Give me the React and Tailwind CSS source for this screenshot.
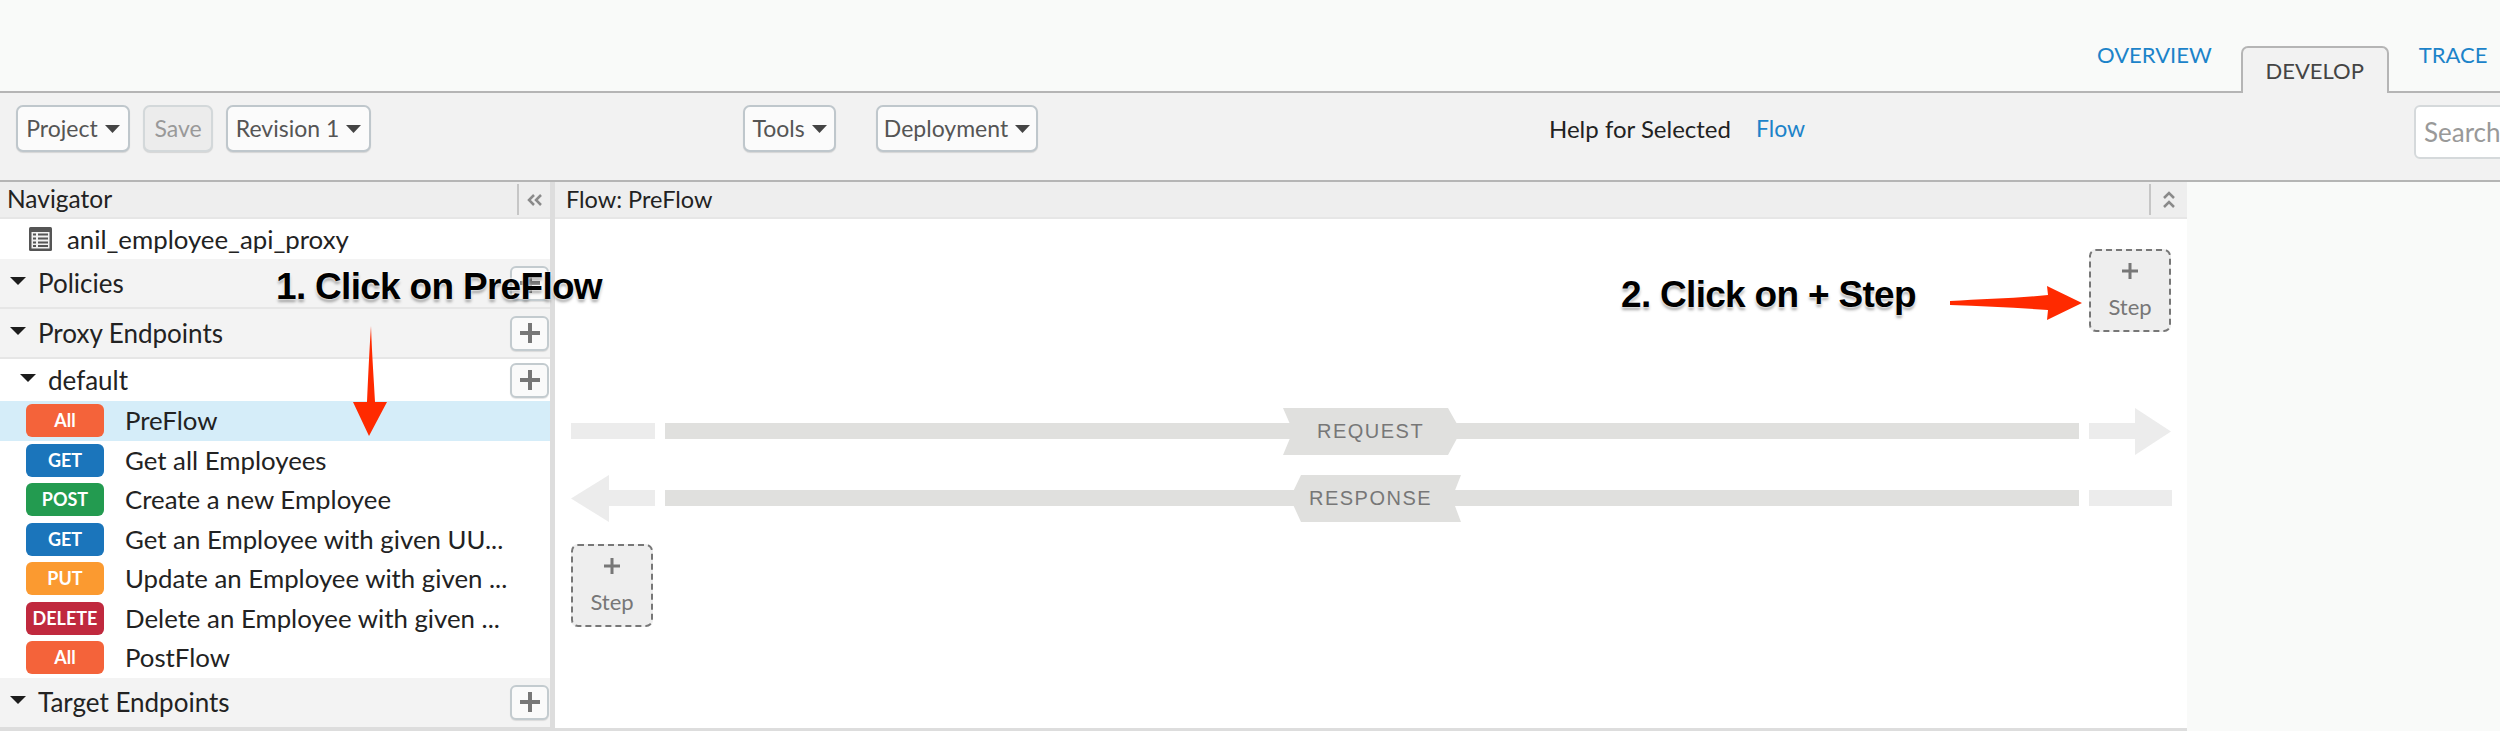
import React from "react";

const METHOD_COLORS = {
  All: "bg-[#f4633a]",
  GET: "bg-[#1b75bb]",
  POST: "bg-[#239b50]",
  PUT: "bg-[#fb9a30]",
  DELETE: "bg-[#c0293e]",
};

const flowItems = [
  { method: "All", label: "PreFlow", selected: true },
  { method: "GET", label: "Get all Employees" },
  { method: "POST", label: "Create a new Employee" },
  { method: "GET", label: "Get an Employee with given UU..." },
  { method: "PUT", label: "Update an Employee with given ..." },
  { method: "DELETE", label: "Delete an Employee with given ..." },
  { method: "All", label: "PostFlow" },
];

function Caret({ className = "" }) {
  return (
    <svg width="16" height="8" viewBox="0 0 16 8" className={className}>
      <path d="M0 0h16L8 8z" fill="#1c1c1c" />
    </svg>
  );
}

function MenuButton({ label, width, disabled, arrow = true }) {
  return (
    <button
      className={`flex h-[47px] shrink-0 items-center justify-center gap-[7px] rounded-[7px] border-2 text-[23px] shadow-[0_1px_1px_rgba(0,0,0,0.12)] ${width} ${
        disabled
          ? "border-[#d3d8da] bg-[#ececec] text-[#999]"
          : "border-[#bfc7cc] bg-[#fbfbfb] text-[#555]"
      }`}>
      {label}
      {arrow && (
        <svg width="15" height="8" viewBox="0 0 15 8">
          <path d="M0 0h15L7.5 8z" fill="#444" />
        </svg>
      )}
    </button>
  );
}

function PlusButton({ className = "" }) {
  return (
    <button
      className={`flex h-[35px] w-[39px] shrink-0 items-center justify-center rounded-[6px] border-2 border-[#c3cbcf] bg-[#fafafa] shadow-[0_1px_1px_rgba(0,0,0,0.1)] ${className}`}>
      <svg width="20" height="20" viewBox="0 0 20 20">
        <path d="M8 0h4v8h8v4h-8v8H8v-8H0V8h8z" fill="#777" />
      </svg>
    </button>
  );
}

function SectionRow({ label, height, indent = false, white = false }) {
  return (
    <div
      className={`flex items-center pr-px ${height} ${
        white ? "bg-white" : "bg-[#f3f3f3]"
      } ${indent ? "pl-[20px]" : "pl-[10px]"}`}>
      <Caret className="-mt-[5px]" />
      <span className="ml-[12px] flex-1 text-[26px] text-[#222]">{label}</span>
      <PlusButton />
    </div>
  );
}

function StepBox() {
  return (
    <div className="flex h-[83px] w-[82px] flex-col items-center rounded-[7px] border-2 border-dashed border-[#777] bg-[#eeeeee] text-[#777]">
      <svg width="16" height="16" viewBox="0 0 16 16" className="mt-[12px]">
        <path d="M6.5 0h3v6.500h6.500v3H9.500V16h-3V9.500H0v-3h6.500z" fill="#777" />
      </svg>
      <span className="mt-[15px] text-[22px] leading-[26px]">Step</span>
    </div>
  );
}

function FlowLabel({ text, width, size, points, textClass }) {
  // the strip runs behind the notches of the tag
  return (
    <div className={`relative h-[47px] shrink-0 ${width}`}>
      <svg className="h-full w-full" viewBox={`0 0 ${size} 47`}>
        <rect x="0" y="15" width={size} height="16" fill="#e0e0de" />
        <polygon points={points} fill="#e0e0de" />
      </svg>
      <span
        className={`absolute top-[10px] font-['Liberation_Sans',sans-serif] text-[20px] leading-[26px] tracking-[1.5px] text-[#777] ${textClass}`}>
        {text}
      </span>
    </div>
  );
}

function Sidebar() {
  return (
    <aside className="flex w-[555px] shrink-0 flex-col border-r-[5px] border-b-[4px] border-[#dddddd] bg-white">
      <div className="flex h-[37px] shrink-0 items-center justify-between border-b-2 border-[#e6e6e6] bg-[#eeeeee] pl-[7px]">
        <span className="text-[24.5px] text-[#222]">Navigator</span>
        <div className="flex h-[31px] w-[33px] items-center justify-center border-l-2 border-[#c6c6c6]">
          <svg width="16" height="12" viewBox="0 0 16 12">
            <path d="M7 1 2 6l5 5M14 1 9 6l5 5" fill="none" stroke="#8a8a8a" strokeWidth="2.500" />
          </svg>
        </div>
      </div>

      <div className="flex h-[40px] shrink-0 items-center bg-white pl-[29px]">
        <svg width="23" height="24" viewBox="0 0 23 24">
          <rect width="23" height="24" rx="1.500" fill="#555" />
          <rect x="2.500" y="5" width="18" height="16.500" fill="#f1f1f1" />
          <path d="M4 7.500h3M9 7.500h10M4 11.500h3M9 11.500h10M4 15.500h3M9 15.500h10M4 19h3M9 19h10" stroke="#555" strokeWidth="2" />
        </svg>
        <span className="ml-[15px] text-[25.8px] text-[#222]">anil_employee_api_proxy</span>
      </div>

      <SectionRow label="Policies" height="h-[48px]" />
      <div className="h-[2px] bg-[#e6e6e6]" />
      <SectionRow label="Proxy Endpoints" height="h-[48px]" />
      <div className="h-[2px] bg-[#e6e6e6]" />
      <SectionRow label="default" height="h-[42px]" indent white />

      <div className="flex flex-col">
        {flowItems.map((item, i) => (
          <div
            key={i}
            className={`flex h-[39.500px] items-center pl-[26px] ${
              item.selected ? "bg-[#d5edf9]" : ""
            }`}>
            <span
              className={`flex h-[33px] w-[78px] items-center justify-center rounded-[6px] text-[18px] font-bold text-white ${METHOD_COLORS[item.method]}`}>
              {item.method}
            </span>
            <span className="ml-[21px] text-[25.8px] text-[#222]">{item.label}</span>
          </div>
        ))}
      </div>

      <div className="flex flex-1 items-center bg-[#f3f3f3] pl-[10px] pr-px">
        <Caret className="-mt-[5px]" />
        <span className="ml-[12px] flex-1 text-[26px] text-[#222]">Target Endpoints</span>
        <PlusButton />
      </div>
    </aside>
  );
}

function Canvas() {
  return (
    <main className="flex w-[1632px] shrink-0 flex-col border-b-[3px] border-[#dddddd] bg-white">
      <div className="flex h-[37px] shrink-0 items-center justify-between border-b-2 border-[#e6e6e6] bg-[#eeeeee] pl-[11px]">
        <span className="text-[23.5px] text-[#222]">Flow: PreFlow</span>
        <div className="flex h-[31px] w-[38px] items-center justify-center border-l-2 border-[#c6c6c6]">
          <svg width="12" height="18" viewBox="0 0 12 18">
            <path d="M1 7 6 2l5 5M1 16l5-5 5 5" fill="none" stroke="#8a8a8a" strokeWidth="2.500" />
          </svg>
        </div>
      </div>

      <div className="flex flex-1 flex-col pl-[16px] pr-[15px] pt-[30px]">
        <div className="flex justify-end pr-px">
          <StepBox />
        </div>

        {/* request */}
        <div className="mt-[76px] flex h-[47px] items-start">
          <div className="mt-[15px] h-[16px] w-[84px] bg-[#ececec]" />
          <div className="ml-[10px] mt-[15px] h-[16px] w-[618px] bg-[#e0e0de]" />
          <FlowLabel
            text="REQUEST"
            width="w-[178px]"
            size={178}
            points="0,0 165,0 178,23 165,47 0,47 10,23"
            textClass="left-[34px]"
          />
          <div className="mt-[15px] h-[16px] w-[618px] bg-[#e0e0de]" />
          <div className="ml-[10px] mt-[15px] h-[16px] w-[46px] bg-[#ececec]" />
          <svg width="36" height="47" viewBox="0 0 36 47">
            <path d="M0 0 36 23.500 0 47z" fill="#ececec" />
          </svg>
        </div>

        {/* response */}
        <div className="mt-[20px] flex h-[47px] items-start">
          <svg width="38" height="47" viewBox="0 0 38 47">
            <path d="M38 0v47L0 23.500z" fill="#ececec" />
          </svg>
          <div className="mt-[15px] h-[16px] w-[46px] bg-[#ececec]" />
          <div className="ml-[10px] mt-[15px] h-[16px] w-[625px] bg-[#e0e0de]" />
          <FlowLabel
            text="RESPONSE"
            width="w-[171px]"
            size={171}
            points="11,0 171,0 162,23 171,47 11,47 0,23"
            textClass="left-[19px]"
          />
          <div className="mt-[15px] h-[16px] w-[618px] bg-[#e0e0de]" />
          <div className="ml-[10px] mt-[15px] h-[16px] w-[83px] bg-[#ececec]" />
        </div>

        <div className="mt-[22px]">
          <StepBox />
        </div>
      </div>
    </main>
  );
}

export default function App() {
  return (
    <div className="relative flex h-[731px] w-[2500px] flex-col overflow-hidden bg-[#f9faf9] font-['Lato','Liberation_Sans',sans-serif]">
      {/* tabs */}
      <div className="flex h-[93px] shrink-0 items-end border-b-2 border-[#b5b5b5] pl-[2097px]">
        <a className="mb-[20px] text-[22px] text-[#1c83c9]">OVERVIEW</a>
        <div className="relative -mb-[2px] ml-[29px] flex h-[47px] w-[148px] items-center justify-center rounded-t-[7px] border-2 border-b-0 border-[#b5b5b5] bg-[#f2f2f2] text-[22px] text-[#444]">
          DEVELOP
        </div>
        <a className="mb-[20px] ml-[30px] text-[22px] text-[#1c83c9]">TRACE</a>
      </div>

      {/* toolbar */}
      <div className="flex h-[89px] shrink-0 items-start border-b-2 border-[#b5b5b5] bg-[#f2f2f2] pt-[12px] pl-[16px]">
        <MenuButton label="Project" width="w-[114px]" />
        <div className="ml-[13px] shrink-0">
          <MenuButton label="Save" width="w-[70px]" disabled arrow={false} />
        </div>
        <div className="ml-[13px] shrink-0">
          <MenuButton label="Revision 1" width="w-[145px]" />
        </div>
        <div className="ml-[372px] shrink-0">
          <MenuButton label="Tools" width="w-[93px]" />
        </div>
        <div className="ml-[40px] shrink-0">
          <MenuButton label="Deployment" width="w-[162px]" />
        </div>
        <div className="ml-[511px] flex h-[47px] w-[255px] shrink-0 items-center whitespace-nowrap">
          <span className="text-[24px] text-[#222]">Help for Selected</span>
          <a className="ml-[25px] text-[23px] text-[#1c83c9]">Flow</a>
        </div>
        <div className="ml-[610px] flex h-[54px] w-[200px] shrink-0 items-center rounded-l-[6px] border-2 border-[#d5d9db] bg-white pl-[8px] text-[26px] text-[#999]">
          Search
        </div>
      </div>

      {/* body */}
      <div className="flex min-h-0 flex-1">
        <Sidebar />
        <Canvas />
      </div>

      {/* screenshot annotations */}
      <div className="absolute left-[276px] top-[265px] font-['Liberation_Sans',sans-serif] text-[37px] font-bold leading-[44px] tracking-[-0.7px] text-black [text-shadow:0_0_2px_#fff,0_0_3px_#fff,0_3px_3px_rgba(0,0,0,0.35)]">
        1. Click on PreFlow
      </div>
      <div className="absolute left-[1621px] top-[273px] font-['Liberation_Sans',sans-serif] text-[37px] font-bold leading-[44px] tracking-[-0.7px] text-black [text-shadow:0_0_2px_#fff,0_0_3px_#fff,0_3px_3px_rgba(0,0,0,0.35)]">
        2. Click on + Step
      </div>
      <svg className="absolute left-[350px] top-[326px]" width="40" height="112" viewBox="0 0 40 112">
        <path d="M21 0 C22 30 24 55 25 76 L37 76 L19 110 L3 76 L17 76 C18 55 19 30 21 0 Z" fill="#ff2a00" />
      </svg>
      <svg className="absolute left-[1948px] top-[284px]" width="136" height="38" viewBox="0 0 136 38">
        <path d="M2 17 C35 15 70 14 100 11 L99 2 L134 19 L99 36 L100 26 C70 24 35 22 2 21 Z" fill="#ff2a00" />
      </svg>
    </div>
  );
}
